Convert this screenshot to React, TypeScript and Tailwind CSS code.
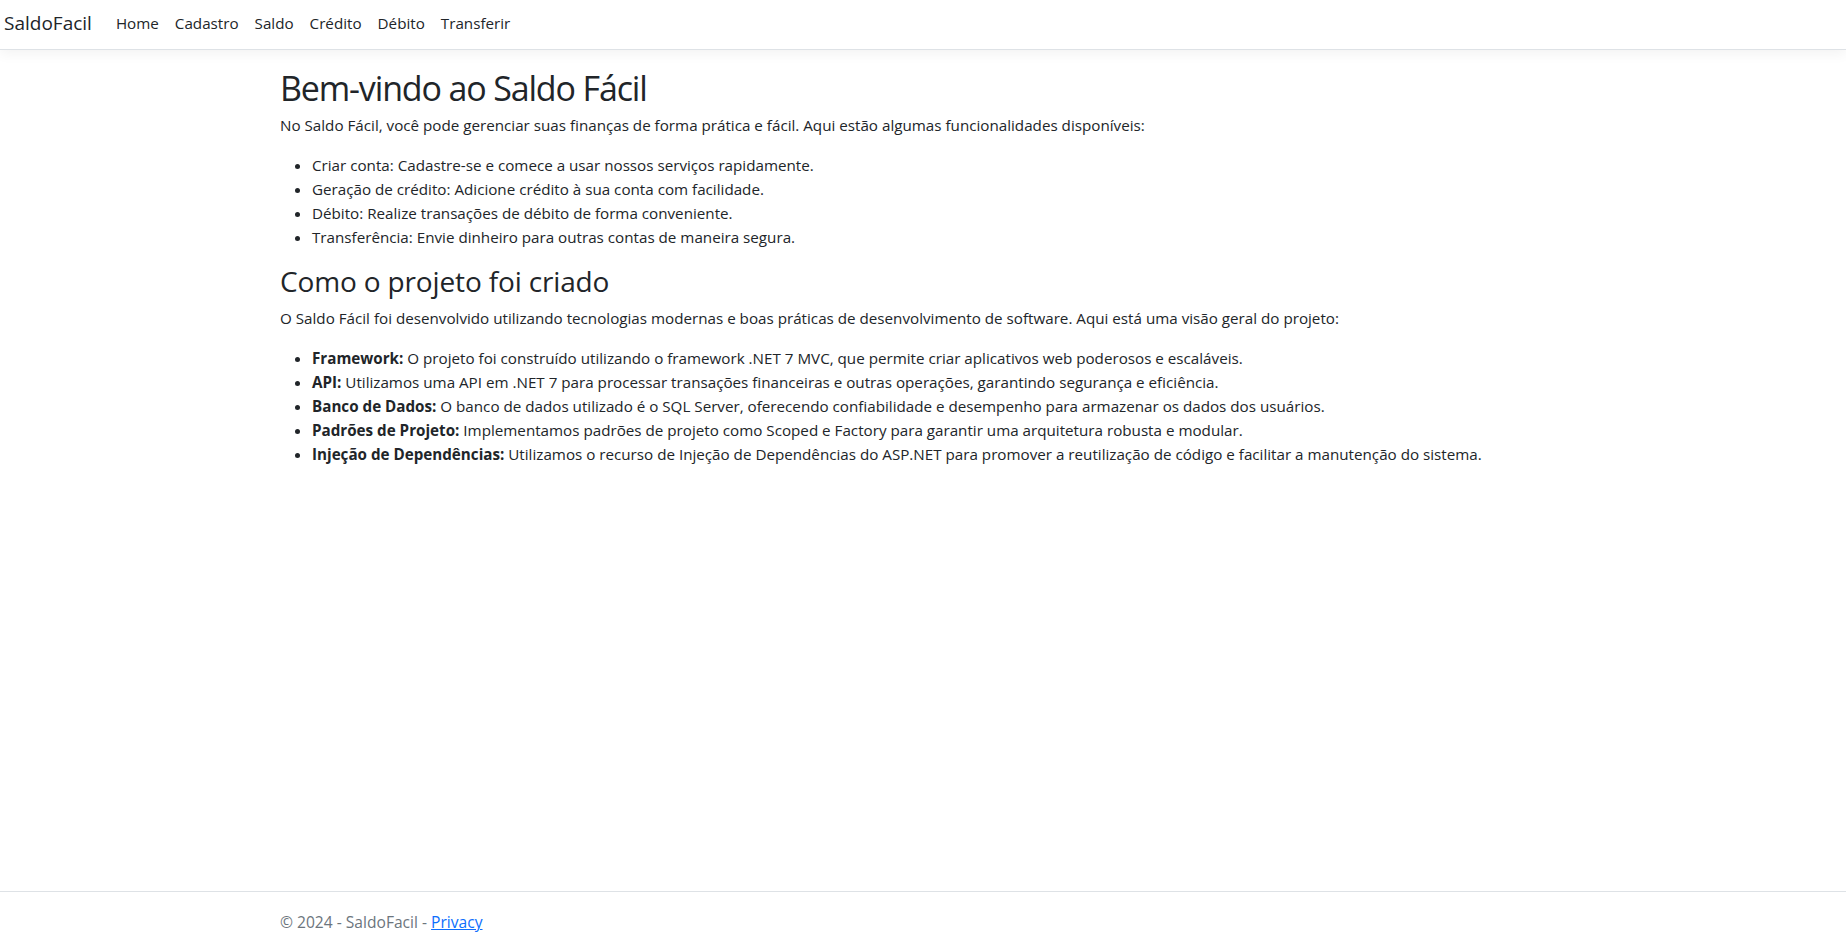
const features = [
  "Criar conta: Cadastre-se e comece a usar nossos serviços rapidamente.",
  "Geração de crédito: Adicione crédito à sua conta com facilidade.",
  "Débito: Realize transações de débito de forma conveniente.",
  "Transferência: Envie dinheiro para outras contas de maneira segura.",
];

const stack = [
  {
    label: "Framework:",
    text: "O projeto foi construído utilizando o framework .NET 7 MVC, que permite criar aplicativos web poderosos e escaláveis.",
  },
  {
    label: "API:",
    text: "Utilizamos uma API em .NET 7 para processar transações financeiras e outras operações, garantindo segurança e eficiência.",
  },
  {
    label: "Banco de Dados:",
    text: "O banco de dados utilizado é o SQL Server, oferecendo confiabilidade e desempenho para armazenar os dados dos usuários.",
  },
  {
    label: "Padrões de Projeto:",
    text: "Implementamos padrões de projeto como Scoped e Factory para garantir uma arquitetura robusta e modular.",
  },
  {
    label: "Injeção de Dependências:",
    text: "Utilizamos o recurso de Injeção de Dependências do ASP.NET para promover a reutilização de código e facilitar a manutenção do sistema.",
  },
];

const links = ["Home", "Cadastro", "Saldo", "Crédito", "Débito", "Transferir"];

export default function App() {
  return (
    <div className="flex min-h-screen flex-col overflow-hidden bg-white font-['Open_Sans',sans-serif] text-[#212529]">
      <header className="flex h-[50px] items-center border-b border-[#dee2e6] pb-[4px] pl-1 shadow-[0_4px_12px_rgba(0,0,0,0.05)]">
        <a href="#" className="mr-4 text-[19px] leading-[30px] text-[#212529]">
          SaldoFacil
        </a>
        <ul className="flex">
          {links.map((link) => (
            <li key={link}>
              <a href="#" className="block px-2 text-[15.2px] leading-6 text-[#212529]">
                {link}
              </a>
            </li>
          ))}
        </ul>
      </header>

      <main className="flex-1">
        <div className="mx-auto max-w-[1310px] px-3 pt-4 text-[15.2px] leading-6">
          <h1 className="mt-[2px] mb-[4px] text-[34px] leading-[1.2] font-medium tracking-[-1.15px]">
            Bem-vindo ao Saldo Fácil
          </h1>
          <p className="mb-4">
            No Saldo Fácil, você pode gerenciar suas finanças de forma prática e fácil. Aqui estão algumas
            funcionalidades disponíveis:
          </p>
          <ul className="mb-4 list-disc pl-8">
            {features.map((item) => (
              <li key={item}>{item}</li>
            ))}
          </ul>

          <h2 className="mb-2 text-[28px] leading-[1.2] font-medium tracking-[-0.15px]">
            Como o projeto foi criado
          </h2>
          <p className="mb-4">
            O Saldo Fácil foi desenvolvido utilizando tecnologias modernas e boas práticas de desenvolvimento de
            software. Aqui está uma visão geral do projeto:
          </p>
          <ul className="mb-4 list-disc pl-8">
            {stack.map((item) => (
              <li key={item.label}>
                <strong className="font-bold">{item.label}</strong> {item.text}
              </li>
            ))}
          </ul>
        </div>
      </main>

      <footer className="h-[51px] border-t border-[#dee2e6] text-[15.6px] leading-[60px] whitespace-nowrap text-[#6c757d]">
        <div className="mx-auto max-w-[1310px] px-3">
          © 2024 - SaldoFacil -{" "}
          <a href="#" className="text-[#0d6efd] underline">
            Privacy
          </a>
        </div>
      </footer>
    </div>
  );
}
